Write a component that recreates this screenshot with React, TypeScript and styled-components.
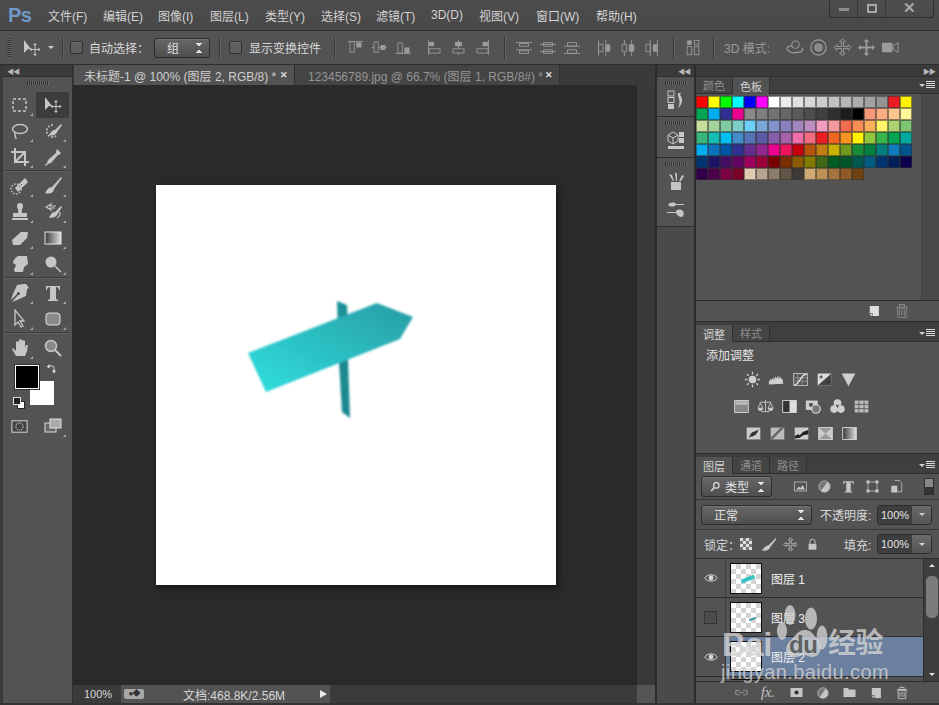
import { FC, ReactNode } from 'react';
import styled, { createGlobalStyle } from 'styled-components';

const GlobalStyle = createGlobalStyle`
  html, body {
    margin: 0;
    padding: 0;
    background: #535353;
  }
  body {
    font-family: "Liberation Sans", "Noto Sans CJK SC", sans-serif;
    font-size: 12px;
    color: #d4d4d4;
  }
`;

const menuItems = ['文件(F)', '编辑(E)', '图像(I)', '图层(L)', '类型(Y)', '选择(S)', '滤镜(T)', '3D(D)', '视图(V)', '窗口(W)', '帮助(H)'];

const swatches = [
  ['#ff0000', '#ffff00', '#00ff00', '#00ffff', '#0000ff', '#ff00ff', '#ffffff', '#ebebeb', '#e1e1e1', '#d7d7d7', '#cccccc', '#c2c2c2', '#b7b7b7', '#acacac', '#a1a1a1', '#959595', '#ed1c24', '#fff200'],
  ['#00a651', '#00aeef', '#2e3192', '#ec008c', '#8a8a8a', '#7f7f7f', '#737373', '#676767', '#5a5a5a', '#4d4d4d', '#3f3f3f', '#2f2f2f', '#1c1c1c', '#000000', '#f7977a', '#fbad82', '#fdc68c', '#fff799'],
  ['#c6df9c', '#a4d49d', '#81ca9d', '#7bcdc9', '#6ccff7', '#7ca6d8', '#8293ca', '#8881be', '#a286bd', '#bc8dbf', '#f49bc1', '#f5999d', '#f16c4d', '#f68e54', '#fbaf5a', '#fff467', '#acd372', '#7dc473'],
  ['#39b778', '#17bcb4', '#00bef2', '#438ccb', '#5573b7', '#5c5aa7', '#855fa8', '#a763a9', '#ef6ea8', '#f16d7e', '#ee1d24', '#f16522', '#f7941d', '#fff100', '#8fc63d', '#37b44a', '#00a650', '#00a99e'],
  ['#00aeef', '#0b72bc', '#0054a6', '#2e3192', '#662d91', '#92278f', '#ec008c', '#ed145b', '#c4000f', '#b45309', '#c17d11', '#c8b400', '#6f9a1f', '#168b38', '#007f3f', '#007f7f', '#0d7cbc', '#00568d'],
  ['#003471', '#1b1464', '#440e62', '#630460', '#9e005d', '#9e0039', '#790000', '#7a2e00', '#8c5a00', '#827b00', '#406618', '#005e20', '#005826', '#005952', '#005b7f', '#003370', '#002157', '#0d004c'],
  ['#32004b', '#4b0049', '#7b0046', '#7a0026', '#e0cbb0', '#b5a58f', '#8c7c69', '#635647', '#3f3a36', '#cfa873', '#bd9157', '#a5733d', '#8e5a26', '#6e4212'],
];

// every glyph sits on a 20x20 grid and takes its colour from the parent
const glyphs: { [key: string]: ReactNode } = {
  move: <><path d="M2 2v13l4-4 3 0z" /><path d="M13 7v9M9 11.500h8" stroke="currentColor" fill="none" /><path d="M13 5l-2 2h4zM13 18l-2-2h4zM7.500 11.500l2-2v4zM18.500 11.500l-2-2v4z" /></>,
  marquee: <rect x="3" y="4" width="13" height="12" fill="none" stroke="currentColor" strokeWidth="1.500" strokeDasharray="3 2" />,
  lasso: <><ellipse cx="10" cy="8" rx="7.500" ry="4.500" fill="none" stroke="currentColor" strokeWidth="1.500" /><path d="M5 11c-1 3 1 5 1 7" fill="none" stroke="currentColor" strokeWidth="1.500" /></>,
  quick: <><path d="M10 4a6 6 0 1 0 3 11" fill="none" stroke="currentColor" strokeWidth="1.500" strokeDasharray="2 1.500" /><path d="M18 3l-6 6c-3 0-4 2-6 5 4 1 7 0 8-3l5-7z" /></>,
  crop: <path d="M5 1v14h14M1 5h14v14M6 14L14 6" fill="none" stroke="currentColor" strokeWidth="2" />,
  dropper: <><path d="M14 2l4 4-2 2-1 0-7 8-3 1-2 2-1-1 2-2 1-3 8-7v-1z" /></>,
  heal: <><circle cx="6" cy="13" r="5" fill="none" stroke="currentColor" strokeWidth="1.500" strokeDasharray="1.500 1.500" /><path d="M8 16L18 6l-3-4L5 12z" /><path d="M9 10l1 1M11 8l1 1M12 11l1 1" stroke="#555" /></>,
  brush: <path d="M18 1L9 11c-3 0-5 2-7 6 4 1 8 1 9-4l8-11z" />,
  stamp: <><path d="M7 4a3 3 0 1 1 6 0c0 3-2 3-1 7h5v4H3v-4h5c1-4-1-4-1-7z" /><rect x="2" y="16" width="16" height="2" /></>,
  history: <><path d="M18 4l-6 6c-3 0-4 2-6 6 4 0 7-1 8-3l5-8z" /><path d="M13 4H7l1-2-5 3 5 3-1-2h5M14 16a6 6 0 0 0 3-6" fill="none" stroke="currentColor" strokeWidth="1.200" /></>,
  eraser: <path d="M11 4h7l-1 6-7 7H3l-1-5z" />,
  gradient: <><defs><linearGradient id="grad-a"><stop offset="0" stopColor="#3a3a3a" /><stop offset="1" stopColor="#e0e0e0" /></linearGradient></defs><rect x="2" y="4" width="16" height="12" fill="url(#grad-a)" stroke="#e8e8e8" /></>,
  smudge: <path d="M8 2h9l1 8-4 3-1 5H5l-1-2 2-5-3-2c0-3 2-5 5-7z" />,
  dodge: <><circle cx="8" cy="8" r="5.500" /><path d="M12 12l6 6" stroke="currentColor" strokeWidth="1.500" /></>,
  pen: <path d="M16 1l3 4-2 1-1 7-9 4-5 2 6-7a1.500 1.500 0 1 0-1-1l-6 6 2-6 4-9 7-1z" />,
  text: <path d="M3 3h14v4h-1c0-2-1-3-3-3v12l2 1v1H5v-1l2-1V4C5 4 4 5 4 7H3z" />,
  select: <path d="M5 1v15l3-3 3 5 2-1-3-5h4z" fill="none" stroke="currentColor" strokeWidth="1.300" />,
  shape: <rect x="3" y="4" width="14" height="12" rx="3" fill="#8a8a8a" stroke="#e0e0e0" />,
  hand: <path d="M6 18L2 11l1-1 3 3V4l1.500-1L9 4v5V2l1.500-1L12 2v7V3l1.500-1L15 3v7l1-3h2l-1 6-2 5z" />,
  zoom: <><circle cx="8" cy="8" r="5.500" fill="#8a8a8a" stroke="currentColor" strokeWidth="1.500" /><path d="M12 12l6 6" stroke="currentColor" strokeWidth="2" /></>,
  mask: <><rect x="2" y="4" width="16" height="12" fill="#444" stroke="#ddd" /><circle cx="10" cy="10" r="3.800" fill="none" stroke="#ddd" strokeDasharray="1.500 1" /></>,
  screen: <><rect x="2" y="7" width="11" height="9" fill="#666" stroke="#ddd" /><rect x="7" y="3" width="11" height="9" fill="#aaa" stroke="#ddd" /></>,
  swap: <><path d="M4 7V4h8c3 0 4 2 4 5v6" fill="none" stroke="currentColor" strokeWidth="2" /><path d="M7 0L2 4.500 7 9zM12 13l4 6 4-6z" /></>,
  alignTop: <><path d="M1 3h18" stroke="currentColor" fill="none" /><rect x="3.500" y="3.500" width="5" height="12" fill="none" stroke="currentColor" /><rect x="11" y="4" width="6" height="6" /></>,
  alignMiddle: <><path d="M1 10h18" stroke="currentColor" fill="none" /><rect x="3.500" y="3.500" width="5" height="12" fill="#555" stroke="currentColor" /><rect x="11" y="7" width="6" height="6" /></>,
  alignBottom: <><path d="M1 17h18" stroke="currentColor" fill="none" /><rect x="3.500" y="4.500" width="5" height="12" fill="none" stroke="currentColor" /><rect x="11" y="10" width="6" height="6.500" /></>,
  alignLeft: <><path d="M3 1v18" stroke="currentColor" fill="none" /><rect x="3.500" y="3.500" width="6" height="5" /><rect x="3.500" y="11.500" width="13" height="5" fill="none" stroke="currentColor" /></>,
  alignCenter: <><path d="M10 1v18" stroke="currentColor" fill="none" /><rect x="6" y="3.500" width="8" height="5" /><rect x="3.500" y="11.500" width="13" height="5" fill="#555" stroke="currentColor" /></>,
  alignRight: <><path d="M17 1v18" stroke="currentColor" fill="none" /><rect x="10" y="3.500" width="7" height="5" /><rect x="3.500" y="11.500" width="13" height="5" fill="none" stroke="currentColor" /></>,
  distTop: <><path d="M1 4h18M1 12h18" stroke="currentColor" fill="none" /><path d="M5 5h10v3H5zM5 13h10v3H5z" fill="none" stroke="currentColor" /></>,
  distMiddle: <><path d="M5 4h10v4H5zM5 12h10v4H5z" fill="#555" stroke="currentColor" /><path d="M1 6h18M1 14h18" stroke="currentColor" fill="none" /></>,
  distBottom: <><path d="M1 8h18M1 16h18" stroke="currentColor" fill="none" /><path d="M5 4h10v4H5zM5 12h10v4H5z" fill="none" stroke="currentColor" /></>,
  distLeft: <><path d="M4 1v18M12 1v18" stroke="currentColor" fill="none" /><path d="M4 6h5v8H4z" fill="none" stroke="currentColor" /><rect x="12" y="6" width="5" height="8" /></>,
  distCenter: <><path d="M6 1v18M14 1v18" stroke="currentColor" fill="none" /><path d="M3.500 6h5v8h-5z" fill="#555" stroke="currentColor" /><rect x="11" y="6" width="6" height="8" /></>,
  distRight: <><path d="M8 1v18M16 1v18" stroke="currentColor" fill="none" /><path d="M3.500 6h4.500v8H3.500z" fill="none" stroke="currentColor" /><rect x="11" y="6" width="5" height="8" /></>,
  autoAlign: <><rect x="3.500" y="1.500" width="5" height="5" /><rect x="11.500" y="1.500" width="5" height="5" fill="none" stroke="currentColor" /><rect x="3.500" y="8.500" width="5" height="9" fill="none" stroke="currentColor" /><rect x="11.500" y="8.500" width="5" height="9" fill="none" stroke="currentColor" /></>,
  orbit: <><circle cx="11" cy="7" r="4" fill="none" stroke="currentColor" /><path d="M2 12c0-3 3-4 5-3M18 10c2 3-2 6-5 5l-4 1-3-1-4-3" fill="none" stroke="currentColor" strokeWidth="1.300" /></>,
  roll: <><circle cx="10" cy="10" r="8" fill="none" stroke="currentColor" strokeWidth="1.300" /><circle cx="10" cy="10" r="4" fill="#8a8a8a" stroke="currentColor" /></>,
  pan: <path d="M10 1l3 3h-2v5h5V7l3 3-3 3v-2h-5v5h2l-3 3-3-3h2v-5H4v2l-3-3 3-3v2h5V4H7z" fill="none" stroke="currentColor" />,
  slide: <path d="M10 1l3 3h-2v5h5V7l3 3-3 3v-2h-5v5h2l-3 3-3-3h2v-5H4v2l-3-3 3-3v2h5V4H7z" />,
  video: <><rect x="1" y="5" width="11" height="10" rx="1" /><path d="M13 8l5-3v10l-5-3z" fill="none" stroke="currentColor" /></>,
  histPanel: <><rect x="2" y="1" width="6" height="5" fill="none" stroke="currentColor" /><rect x="2" y="7.500" width="6" height="5" fill="none" stroke="currentColor" /><rect x="2" y="14" width="6" height="5" /><path d="M12 3h3l-1 2c3 3 3 9-2 13 2-4 2-8 0-12z" /></>,
  cubePanel: <><path d="M7 2l5 3v6l-5 3-5-3V5z" fill="none" stroke="currentColor" /><path d="M2 5l5 3 5-3M7 8v6" fill="none" stroke="currentColor" /><rect x="13" y="2" width="5" height="5" /><rect x="13" y="8" width="5" height="5" /><rect x="2" y="16" width="16" height="3" /></>,
  brushes: <><path d="M5 11h10v8H5z" /><path d="M7 10L3 3l3 1 2 6zM10 10L9 1l2 2 0 7zM13 10l3-6 2 1-3 5z" /></>,
  brushPreset: <><path d="M2 6c2-3 6-3 8-1h8v1h-8c-2 2-6 2-8 0z" /><path d="M1 13h9v-1c2-2 5-2 7 0 1 2 1 5-1 6-3 0-5-2-6-4H1z" /></>,
  sun: <><circle cx="10" cy="10" r="4.500" /><path d="M10 1v3M10 16v3M1 10h3M16 10h3M3.500 3.500l2 2M14.500 14.500l2 2M3.500 16.500l2-2M14.500 5.500l2-2" stroke="currentColor" strokeWidth="1.500" /></>,
  levels: <path d="M1 16v-5l1 1 1-3 1 2 1-3 1 3 1-4 1 3 1-4 1 3 1-3 1 3 1-4 1 4 1-2 1 3 1-1 1 6z" />,
  curves: <><rect x="2" y="3" width="16" height="14" fill="none" stroke="currentColor" /><path d="M2 8h16M2 12h16M7 3v14M12 3v14" stroke="#999" /><path d="M3 16c7 0 6-12 14-12" fill="none" stroke="#eee" strokeWidth="1.500" /></>,
  exposure: <><rect x="2" y="3" width="16" height="14" fill="#ddd" /><path d="M18 3v14H2z" fill="#444" /><path d="M4 7h4M6 5v4M12 13h4" stroke="#222" /></>,
  vibrance: <path d="M2 3h16l-8 15z" />,
  hue: <><rect x="2" y="3" width="16" height="14" fill="#888" stroke="#ddd" /><rect x="3" y="4" width="14" height="4" fill="#bbb" /></>,
  balance: <><path d="M10 2v14M5 16h10M3 5h14M4 6l-3 6h6zM16 6l-3 6h6z" fill="none" stroke="currentColor" /><path d="M1 12a3 3 0 0 0 6 0zM13 12a3 3 0 0 0 6 0z" /></>,
  bw: <><rect x="2" y="3" width="16" height="14" fill="#333" stroke="#ddd" /><rect x="10" y="3" width="8" height="14" fill="#ddd" /></>,
  photo: <><rect x="1" y="3" width="14" height="11" /><circle cx="13" cy="13" r="5" fill="#777" stroke="#ddd" strokeWidth="1.300" /><circle cx="7" cy="8" r="2.500" fill="#555" /></>,
  mixer: <><circle cx="10" cy="6" r="4.500" /><circle cx="6" cy="13" r="4.500" /><circle cx="14" cy="13" r="4.500" /><path d="M8 8h4l-2 4z" fill="#555" /></>,
  lookup: <><rect x="2" y="3" width="16" height="14" fill="#bbb" /><path d="M2 7.500h16M2 12.500h16M7 3v14M13 3v14" stroke="#555" /></>,
  invert: <><rect x="2" y="3" width="16" height="14" fill="#ccc" /><path d="M4 15c2-1 2-6 6-7 3-1 4-1 6-3-1 4-3 7-6 8-3 1-4 1-6 2z" fill="#333" /></>,
  posterize: <><rect x="2" y="3" width="16" height="14" fill="#bbb" /><path d="M2 15L14 3h4L4 17H2z" fill="#666" /></>,
  threshold: <><rect x="2" y="3" width="16" height="14" fill="#ccc" /><path d="M2 13l4-2 2 1 4-4 6-2v5l-6 1-4 3-6 1z" fill="#222" /></>,
  selective: <><rect x="2" y="3" width="16" height="14" fill="#999" stroke="#ddd" /><path d="M2 3l8 7-8 7zM18 3l-8 7 8 7z" fill="#ccc" /></>,
  gradMap: <><rect x="2" y="3" width="16" height="14" fill="url(#grad-a)" stroke="#ddd" /></>,
  image: <><rect x="2" y="4" width="16" height="12" fill="none" stroke="currentColor" /><path d="M4 14l4-4 2 2 3-4 3 6z" /></>,
  half: <><circle cx="10" cy="10" r="7.500" fill="#777" stroke="currentColor" /><path d="M14 4a7.500 7.500 0 0 1-9 12z" /></>,
  frame: <><rect x="4" y="4" width="12" height="12" fill="none" stroke="currentColor" /><path d="M2 2h4v4H2zM14 2h4v4h-4zM2 14h4v4H2zM14 14h4v4h-4z" /></>,
  smart: <><path d="M8 2h6l3 3v12h-6" fill="none" stroke="currentColor" /><rect x="3" y="9" width="8" height="9" /></>,
  search: <><circle cx="11.500" cy="8" r="5" fill="none" stroke="currentColor" strokeWidth="2" /><path d="M8 12l-6 6" stroke="currentColor" strokeWidth="2.500" /></>,
  brushLock: <path d="M19 2L10 11c-3 0-5 3-8 6 5 1 9 0 10-4l7-9z" />,
  lock: <><path d="M6 9V6a4 4 0 0 1 8 0v3" fill="none" stroke="currentColor" strokeWidth="1.500" /><rect x="4" y="9" width="12" height="9" /></>,
  eye: <><path d="M1 10c4-6 14-6 18 0-4 6-14 6-18 0z" fill="none" stroke="currentColor" strokeWidth="1.400" /><circle cx="10" cy="10" r="3.400" /></>,
  link: <path d="M8 7H5a3 3 0 0 0 0 6h3M12 7h3a3 3 0 0 1 0 6h-3M6 10h8" fill="none" stroke="currentColor" strokeWidth="1.500" />,
  layerMask: <><rect x="2" y="4" width="16" height="12" /><circle cx="10" cy="10" r="2.800" fill="#333" /></>,
  folder: <path d="M2 4h6l1 2h9v10H2z" />,
  newLayer: <><path d="M4 3h13v14H8v-4H4z" /><path d="M3 14h4v4z" /></>,
  trash: <><path d="M7 4V2h6v2M3 5h14" fill="none" stroke="currentColor" strokeWidth="1.300" /><path d="M4 6.500h12L15 18H5zM7 8.500v7M10 8.500v7M13 8.500v7" fill="none" stroke="currentColor" strokeWidth="1.200" /></>,
};

const Svg = styled.svg<{ $size: number; $tone: string }>`
  width: ${p => p.$size}px;
  height: ${p => p.$size}px;
  color: ${p => p.$tone};
  fill: currentColor;
  flex: none;
  display: block;
`;

const Glyph: FC<{ name: string; size?: number; tone?: string }> = ({ name, size = 18, tone = '#c6c6c6' }) => (
  <Svg viewBox="0 0 20 20" $size={size} $tone={tone}>{glyphs[name]}</Svg>
);

const Frame = styled.div`
  width: 939px;
  height: 705px;
  box-sizing: border-box;
  overflow: hidden;
  position: relative;
  display: flex;
  flex-direction: column;
  background: #535353;
  border-bottom: 2px solid #333;
`;

const MenuBar = styled.div`
  height: 31px;
  flex: none;
  display: flex;
  align-items: center;
  background: linear-gradient(#4e4d4d, #494848);
  border-bottom: 1px solid #2e2e2e;
  box-sizing: border-box;
  position: relative;
`;

const Logo = styled.div`
  width: 48px;
  padding-left: 8px;
  box-sizing: border-box;
  font-size: 20px;
  font-weight: 700;
  color: #6f9ac7;
  letter-spacing: -0.5px;
`;

const MenuItem = styled.span<{ $width: number }>`
  width: ${p => p.$width}px;
  color: #d2d2d2;
  font-size: 12px;
  white-space: nowrap;
`;

const WindowControls = styled.div`
  position: absolute;
  right: 5px;
  top: -1px;
  height: 18px;
  display: flex;
  border: 1px solid #2e2e2e;
  border-top: none;
  border-radius: 0 0 3px 3px;
`;

const WindowButton = styled.div<{ $width: number }>`
  width: ${p => p.$width}px;
  display: flex;
  align-items: center;
  justify-content: center;
  border-left: 1px solid #373737;
  color: #a8a8a8;
  &:first-child {
    border-left: none;
  }
`;

const MinBar = styled.div`
  width: 10px;
  height: 3px;
  margin-top: 3px;
  background: #8f8f8f;
`;

const MaxBox = styled.div`
  width: 6px;
  height: 5px;
  border: 2px solid #a8a8a8;
`;

const CloseMark = styled.span`
  font-size: 15px;
  font-weight: 700;
  line-height: 16px;
`;

const OptionsBar = styled.div`
  height: 34px;
  flex: none;
  display: flex;
  align-items: center;
  background: #535353;
  border-bottom: 1px solid #2e2e2e;
  box-sizing: border-box;
  padding-left: 7px;
`;

const Grip = styled.div`
  width: 4px;
  height: 20px;
  flex: none;
  background: repeating-linear-gradient(#3a3a3a 0 1px, #5f5f5f 1px 2px);
`;

const HGrip = styled.div`
  width: 22px;
  height: 4px;
  margin: 4px auto 0;
  background: repeating-linear-gradient(90deg, #2f2f2f 0 1px, #6a6a6a 1px 2px);
`;

const ToolPreset = styled.div`
  width: 38px;
  margin-left: 11px;
  display: flex;
  align-items: center;
  gap: 6px;
`;

const Caret = styled.span`
  width: 0;
  height: 0;
  border-left: 3px solid transparent;
  border-right: 3px solid transparent;
  border-top: 3px solid #d0d0d0;
`;

const BarDivider = styled.div<{ $left: number; $right: number }>`
  width: 1px;
  height: 22px;
  flex: none;
  margin: 0 ${p => p.$right}px 0 ${p => p.$left}px;
  background: #3a3a3a;
  box-shadow: 1px 0 0 #626262;
`;

const CheckBox = styled.div`
  width: 13px;
  height: 13px;
  box-sizing: border-box;
  flex: none;
  border-radius: 2px;
  border: 1px solid #2f2f2f;
  background: #5f5f5f;
  box-shadow: inset 0 1px 0 #6d6d6d;
`;

const BarLabel = styled.span<{ $left: number; $width: number; $tone?: string }>`
  margin-left: ${p => p.$left}px;
  width: ${p => p.$width}px;
  flex: none;
  white-space: nowrap;
  color: ${p => p.$tone ?? '#d8d8d8'};
`;

const SelectBox = styled.div<{ $width: number; $height?: number }>`
  width: ${p => p.$width}px;
  height: ${p => p.$height ?? 20}px;
  box-sizing: border-box;
  flex: none;
  display: flex;
  align-items: center;
  padding: 0 7px 0 8px;
  border-radius: 3px;
  border: 1px solid #2c2c2c;
  background: linear-gradient(#676767, #4e4e4e);
  box-shadow: inset 0 1px 0 #757575;
  color: #e0e0e0;
`;

const SelectText = styled.span`
  flex: 1;
  margin-left: 4px;
  white-space: nowrap;
`;

const UpDown = styled.span`
  width: 6px;
  height: 10px;
  flex: none;
  background:
    linear-gradient(45deg, transparent 50%, #e0e0e0 50%) 0 0 / 3px 4px no-repeat,
    linear-gradient(-45deg, transparent 50%, #e0e0e0 50%) 3px 0 / 3px 4px no-repeat,
    linear-gradient(135deg, transparent 50%, #e0e0e0 50%) 0 6px / 3px 4px no-repeat,
    linear-gradient(-135deg, transparent 50%, #e0e0e0 50%) 3px 6px / 3px 4px no-repeat;
`;

const IconSlot = styled.div<{ $width: number }>`
  width: ${p => p.$width}px;
  flex: none;
  display: flex;
  justify-content: center;
`;

const Workspace = styled.div`
  flex: 1;
  min-height: 0;
  display: flex;
`;

const Toolbox = styled.div`
  width: 73px;
  flex: none;
  box-sizing: border-box;
  border-left: 3px solid #3a3a3a;
  border-right: 1px solid #2e2e2e;
  background: #535353;
`;

const CollapseBar = styled.div<{ $align?: string }>`
  height: 12px;
  flex: none;
  background: #3b3b3b;
  display: flex;
  align-items: center;
  justify-content: ${p => p.$align ?? 'flex-start'};
  padding: 0 4px;
  box-sizing: border-box;
  color: #b8b8b8;
  font-size: 7px;
  letter-spacing: -1px;
  border-bottom: 1px solid #2e2e2e;
`;

const ToolGrip = styled.div`
  height: 15px;
  display: flow-root;
`;

const ToolGroup = styled.div`
  display: grid;
  grid-template-columns: 33px 33px;
  border-bottom: 1px solid #3d3d3d;
  box-shadow: 0 1px 0 #5f5f5f;
  margin: 0 2px 2px 0;
  &:nth-of-type(6) {
    border-bottom: none;
    box-shadow: none;
  }
`;

const ToolCell = styled.div<{ $active?: boolean; $more?: boolean }>`
  height: 26px;
  position: relative;
  display: flex;
  align-items: center;
  justify-content: center;
  box-sizing: border-box;
  border-radius: 2px;
  background: ${p => (p.$active ? '#3c3c3c' : 'transparent')};
  &::after {
    content: '';
    display: ${p => (p.$more ? 'block' : 'none')};
    position: absolute;
    right: 3px;
    bottom: 2px;
    width: 0;
    height: 0;
    border-left: 3px solid transparent;
    border-bottom: 3px solid #a8a8a8;
  }
`;

const ColorWell = styled.div`
  height: 50px;
  position: relative;
`;

const Foreground = styled.div`
  position: absolute;
  left: 12px;
  top: 2px;
  width: 22px;
  height: 22px;
  border: 1px solid #fff;
  background: #000;
  outline: 1px solid #2e2e2e;
  z-index: 1;
`;

const Background = styled.div`
  position: absolute;
  left: 27px;
  top: 18px;
  width: 24px;
  height: 24px;
  background: #fff;
`;

const SwapMark = styled.div`
  position: absolute;
  left: 43px;
  top: 1px;
`;

const DefaultLower = styled.div`
  position: absolute;
  left: 14px;
  top: 38px;
  width: 6px;
  height: 6px;
  background: #fff;
  border: 1px solid #222;
`;

const DefaultUpper = styled.div`
  position: absolute;
  left: 10px;
  top: 34px;
  width: 6px;
  height: 6px;
  background: #222;
  border: 1px solid #ddd;
`;

const MaskRow = styled.div`
  display: grid;
  grid-template-columns: 33px 33px;
`;

const DocColumn = styled.div`
  width: 582px;
  flex: none;
  display: flex;
  flex-direction: column;
  background: #2b292b;
`;

const TabBar = styled.div`
  height: 20px;
  flex: none;
  display: flex;
  background: #3b3a3b;
  padding-left: 1px;
`;

const DocTab = styled.div<{ $active?: boolean; $width: number }>`
  width: ${p => p.$width}px;
  flex: none;
  box-sizing: border-box;
  padding: 0 6px 0 ${p => (p.$active ? 10 : 13)}px;
  display: flex;
  align-items: center;
  justify-content: space-between;
  white-space: nowrap;
  font-size: 12px;
  background: ${p => (p.$active ? '#535353' : '#454445')};
  color: ${p => (p.$active ? '#cfcfcf' : '#949494')};
  border-right: 1px solid #303030;
`;

const TabClose = styled.span`
  color: #dedede;
  font-size: 9px;
  font-weight: 700;
`;

const DocBody = styled.div`
  flex: 1;
  min-height: 0;
  display: flex;
`;

const DocPane = styled.div`
  flex: 1;
  display: flex;
  flex-direction: column;
  min-width: 0;
`;

const Pasteboard = styled.div`
  flex: 1;
  min-height: 0;
  padding: 100px 0 0 83px;
  background: #2b292b;
`;

const Canvas = styled.div`
  width: 400px;
  height: 400px;
  position: relative;
  background: #fff;
  box-shadow: 2px 3px 6px rgba(0, 0, 0, 0.55);
`;

const SignArt = styled.svg`
  position: absolute;
  left: 74px;
  top: 100px;
  width: 200px;
  height: 145px;
`;

const DocScroll = styled.div`
  width: 18px;
  flex: none;
  display: flex;
  flex-direction: column;
  background: #3a393a;
`;

const ScrollCorner = styled.div`
  height: 18px;
  margin-top: auto;
  background: #555;
`;

const StatusBar = styled.div`
  height: 18px;
  flex: none;
  display: flex;
  align-items: center;
  background: #3c3b3c;
  color: #d8d8d8;
`;

const ZoomField = styled.div`
  width: 48px;
  flex: none;
  padding-left: 11px;
  box-sizing: border-box;
  font-size: 11px;
`;

const StatusMain = styled.div`
  width: 209px;
  height: 100%;
  flex: none;
  display: flex;
  align-items: center;
  background: #535353;
  box-sizing: border-box;
  padding-left: 3px;
`;

const StatusChip = styled.div`
  width: 20px;
  height: 10px;
  flex: none;
  background: #a8a8a8;
  border-radius: 2px;
  color: #333;
  font-size: 8px;
  line-height: 10px;
  text-align: center;
  letter-spacing: -1px;
`;

const StatusText = styled.span`
  margin-left: 39px;
  width: 137px;
  flex: none;
  font-size: 12px;
`;

const PlayMark = styled.span`
  width: 0;
  height: 0;
  border-top: 4px solid transparent;
  border-bottom: 4px solid transparent;
  border-left: 7px solid #e8e8e8;
`;

const Dock = styled.div`
  width: 41px;
  flex: none;
  box-sizing: border-box;
  border-left: 2px solid #2b2b2b;
  border-right: 2px solid #2b2b2b;
  background: #4a4a4a;
  display: flex;
  flex-direction: column;
`;

const DockGroup = styled.div<{ $height: number }>`
  height: ${p => p.$height}px;
  box-sizing: border-box;
  background: #535353;
  border-bottom: 1px solid #2e2e2e;
  display: flex;
  flex-direction: column;
  align-items: center;
`;

const DockIcons = styled.div`
  margin-top: 5px;
  display: flex;
  flex-direction: column;
  align-items: center;
  gap: 8px;
`;

const Panels = styled.div`
  flex: 1;
  min-width: 0;
  display: flex;
  flex-direction: column;
  background: #3d3d3d;
`;

const PanelSection = styled.div<{ $height: number }>`
  height: ${p => p.$height}px;
  flex: none;
  box-sizing: border-box;
  display: flex;
  flex-direction: column;
  background: #535353;
  border-bottom: 1px solid #2e2e2e;
  margin-bottom: 3px;
`;

const LayersSection = styled(PanelSection)`
  margin-bottom: 0;
  border-bottom: none;
`;

const TabStrip = styled.div`
  height: 17px;
  flex: none;
  display: flex;
  align-items: stretch;
  background: #403f40;
  border-bottom: 1px solid #2e2e2e;
  position: relative;
  box-sizing: border-box;
`;

const PanelTab = styled.div<{ $active?: boolean }>`
  width: 37px;
  flex: none;
  display: flex;
  align-items: center;
  justify-content: center;
  font-size: 11px;
  box-sizing: border-box;
  border-right: 1px solid #303030;
  background: ${p => (p.$active ? '#535353' : '#454445')};
  color: ${p => (p.$active ? '#d4d4d4' : '#8f8f8f')};
  height: ${p => (p.$active ? '17px' : '16px')};
`;

const PanelMenu = styled.div`
  position: absolute;
  right: 4px;
  top: 4px;
  display: flex;
  align-items: center;
  gap: 1px;
`;

const MenuLines = styled.div`
  width: 9px;
  height: 8px;
  background: repeating-linear-gradient(#d8d8d8 0 1px, transparent 1px 2px);
`;

const SwatchBody = styled.div`
  flex: 1;
  min-height: 0;
  display: flex;
`;

const SwatchGrid = styled.div`
  width: 216px;
  flex: none;
  padding: 2px 0 0 0;
`;

const SwatchRow = styled.div`
  display: flex;
`;

const Swatch = styled.div<{ $color: string }>`
  width: 12px;
  height: 12px;
  box-sizing: border-box;
  background: ${p => p.$color};
  border: 1px solid rgba(50, 50, 50, 0.55);
`;

const SwatchScroll = styled.div`
  flex: 1;
  margin-left: 9px;
  border-left: 1px solid #444;
  background: #4a494a;
`;

const PanelFooter = styled.div`
  height: 20px;
  flex: none;
  display: flex;
  align-items: center;
  justify-content: flex-end;
  gap: 13px;
  padding-right: 29px;
  border-top: 1px solid #2e2e2e;
  position: relative;
`;

const ResizeDots = styled.div`
  position: absolute;
  right: 2px;
  bottom: 2px;
  width: 9px;
  height: 9px;
  background: radial-gradient(#222 40%, transparent 45%) 0 0 / 2px 2px;
  clip-path: polygon(100% 0, 100% 100%, 0 100%);
`;

const AdjustTitle = styled.div`
  padding: 4px 0 0 10px;
  font-size: 12px;
  color: #e4e4e4;
  height: 20px;
`;

const AdjustRow = styled.div<{ $left: number }>`
  display: flex;
  gap: 7px;
  padding-left: ${p => p.$left}px;
  height: 27px;
  align-items: center;
`;

const LayerTool = styled.div`
  height: 26px;
  flex: none;
  display: flex;
  align-items: center;
  box-sizing: border-box;
  border-bottom: 1px solid #373737;
  padding-left: 5px;
`;

const BlendRow = styled.div`
  height: 30px;
  flex: none;
  display: flex;
  align-items: center;
  box-sizing: border-box;
  border-bottom: 1px solid #373737;
  padding-left: 5px;
`;

const LockRow = styled.div`
  height: 29px;
  flex: none;
  display: flex;
  align-items: center;
  box-sizing: border-box;
  border-bottom: 1px solid #2e2e2e;
  padding-left: 8px;
`;

const LockChecker = styled.div`
  width: 12px;
  height: 12px;
  flex: none;
  background: repeating-conic-gradient(#777 0 25%, #ddd 0 50%) 0 0 / 6px 6px;
`;

const PercentBox = styled.div`
  width: 55px;
  height: 20px;
  margin-left: 3px;
  flex: none;
  display: flex;
  box-sizing: border-box;
  border: 1px solid #2c2c2c;
  border-radius: 3px;
  overflow: hidden;
`;

const PercentValue = styled.div`
  flex: 1;
  background: #3e3e3e;
  color: #e4e4e4;
  font-size: 11px;
  padding-left: 3px;
  line-height: 18px;
`;

const PercentArrow = styled.div`
  width: 19px;
  display: flex;
  align-items: center;
  justify-content: center;
  background: linear-gradient(#6b6b6b, #555);
`;

const FilterToggle = styled.div`
  width: 8px;
  height: 15px;
  margin-left: 16px;
  flex: none;
  background: linear-gradient(#888 50%, #333 50%);
  border: 1px solid #2e2e2e;
`;

const LayerList = styled.div`
  height: 122px;
  flex: none;
  display: flex;
  overflow: hidden;
`;

const LayerRows = styled.div`
  flex: 1;
  min-width: 0;
`;

const LayerRow = styled.div<{ $selected?: boolean; $height: number }>`
  height: ${p => p.$height}px;
  box-sizing: border-box;
  display: flex;
  align-items: center;
  border-bottom: 1px solid #2e2e2e;
  background: ${p => (p.$selected ? '#6b7f9e' : '#535353')};
`;

const NextThumbEdge = styled.div`
  width: 32px;
  height: 1px;
  margin: 2px 0 0 35px;
  background: #0e0e0e;
`;

const EyeCell = styled.div`
  width: 30px;
  height: 100%;
  flex: none;
  display: flex;
  align-items: center;
  justify-content: center;
  border-right: 1px solid #3c3c3c;
  box-sizing: border-box;
  background: #535353;
`;

const HiddenBox = styled.div`
  width: 11px;
  height: 11px;
  border: 1px solid #333;
  background: #4d4d4d;
`;

const Thumb = styled.div`
  width: 32px;
  height: 31px;
  margin-left: 4px;
  flex: none;
  box-sizing: border-box;
  border: 1px solid #0e0e0e;
  background: repeating-conic-gradient(#d4d4d4 0 25%, #fff 0 50%) 0 0 / 10px 10px;
  position: relative;
  overflow: hidden;
`;

const ThumbMark = styled.div<{ $wide?: boolean }>`
  position: absolute;
  left: ${p => (p.$wide ? 10 : 18)}px;
  top: ${p => (p.$wide ? 13 : 15)}px;
  width: ${p => (p.$wide ? 14 : 7)}px;
  height: ${p => (p.$wide ? 4 : 2)}px;
  background: ${p => (p.$wide ? '#35c4c4' : '#3a9aa0')};
  transform: rotate(-22deg);
  filter: blur(0.6px);
`;

const LayerName = styled.span`
  margin-left: 9px;
  color: #f0f0f0;
  font-size: 12px;
`;

const LayerScroll = styled.div`
  width: 16px;
  flex: none;
  background: #3e3e3e;
  display: flex;
  flex-direction: column;
  align-items: center;
  border-left: 1px solid #2e2e2e;
  box-sizing: border-box;
`;

const ScrollThumb = styled.div`
  width: 12px;
  height: 42px;
  margin-top: 9px;
  border-radius: 5px;
  background: #7c7c7c;
`;

const ScrollUp = styled.span`
  margin-top: 5px;
  width: 0;
  height: 0;
  border-left: 3px solid transparent;
  border-right: 3px solid transparent;
  border-bottom: 3px solid #ddd;
`;

const ScrollDown = styled.span`
  margin-top: auto;
  margin-bottom: 5px;
  width: 0;
  height: 0;
  border-left: 3px solid transparent;
  border-right: 3px solid transparent;
  border-top: 3px solid #ddd;
`;

const LayerFooter = styled.div`
  flex: 1;
  display: flex;
  align-items: center;
  gap: 12px;
  padding-left: 38px;
  border-top: 1px solid #2e2e2e;
  color: #c6c6c6;
`;

const FxMark = styled.span`
  font-family: "Liberation Serif", serif;
  font-style: italic;
  font-size: 14px;
  width: 16px;
`;

const Watermark = styled.div`
  position: absolute;
  left: 721px;
  top: 604px;
  width: 218px;
  height: 80px;
  pointer-events: none;
  color: rgba(212, 212, 212, 0.78);
`;

const PawSvg = styled.svg`
  position: absolute;
  left: 56px;
  top: 0;
  width: 52px;
  height: 56px;
  fill: rgba(212, 212, 212, 0.78);
`;

const WatermarkWord = styled.span<{ $left: number; $top: number; $size: number; $dark?: boolean }>`
  position: absolute;
  left: ${p => p.$left}px;
  top: ${p => p.$top}px;
  font-size: ${p => p.$size}px;
  font-weight: 700;
  letter-spacing: -0.5px;
  white-space: nowrap;
  color: ${p => (p.$dark ? 'rgba(83, 83, 83, 0.9)' : 'inherit')};
`;

const WatermarkUrl = styled.div`
  position: absolute;
  left: 0;
  top: 57px;
  font-size: 20px;
  letter-spacing: 0.4px;
  white-space: nowrap;
`;

const tools = [
  [['marquee', true], ['move', false], ['lasso', true], ['quick', true], ['crop', true], ['dropper', true]],
  [['heal', true], ['brush', true], ['stamp', true], ['history', true], ['eraser', true], ['gradient', true], ['smudge', true], ['dodge', true]],
  [['pen', true], ['text', true], ['select', true], ['shape', true]],
  [['hand', true], ['zoom', false]],
] as [string, boolean][][];

const adjustRows: { left: number; names: string[] }[] = [
  { left: 48, names: ['sun', 'levels', 'curves', 'exposure', 'vibrance'] },
  { left: 37, names: ['hue', 'balance', 'bw', 'photo', 'mixer', 'lookup'] },
  { left: 49, names: ['invert', 'posterize', 'threshold', 'selective', 'gradMap'] },
];

const layers = [
  { name: '图层 1', height: 39, wide: true, visible: true },
  { name: '图层 3', height: 39, wide: false, visible: false },
  { name: '图层 2', height: 40, wide: false, visible: true, selected: true, empty: true },
];

const App: FC = () => {
  const menuWidths = [55, 55, 52, 55, 56, 55, 55, 48, 57, 60, 50];

  return (
    <Frame>
      <GlobalStyle />
      <MenuBar>
        <Logo>Ps</Logo>
        {menuItems.map((item, i) => (
          <MenuItem key={item} $width={menuWidths[i]}>{item}</MenuItem>
        ))}
        <WindowControls>
          <WindowButton $width={27}><MinBar /></WindowButton>
          <WindowButton $width={27}><MaxBox /></WindowButton>
          <WindowButton $width={47}><CloseMark>✕</CloseMark></WindowButton>
        </WindowControls>
      </MenuBar>

      <OptionsBar>
        <Grip />
        <ToolPreset>
          <Glyph name="move" size={20} />
          <Caret />
        </ToolPreset>
        <BarDivider $left={2} $right={7} />
        <CheckBox />
        <BarLabel $left={6} $width={65}>自动选择：</BarLabel>
        <SelectBox $width={56}><SelectText>组</SelectText><UpDown /></SelectBox>
        <BarDivider $left={9} $right={9} />
        <CheckBox />
        <BarLabel $left={7} $width={85}>显示变换控件</BarLabel>
        <BarDivider $left={0} $right={8} />
        {['alignTop', 'alignMiddle', 'alignBottom'].map(n => (
          <IconSlot key={n} $width={24}><Glyph name={n} size={17} tone="#9c9c9c" /></IconSlot>
        ))}
        <IconSlot $width={7} />
        {['alignLeft', 'alignCenter', 'alignRight'].map(n => (
          <IconSlot key={n} $width={24}><Glyph name={n} size={17} tone="#9c9c9c" /></IconSlot>
        ))}
        <BarDivider $left={10} $right={7} />
        {['distTop', 'distMiddle', 'distBottom'].map(n => (
          <IconSlot key={n} $width={24}><Glyph name={n} size={18} tone="#9c9c9c" /></IconSlot>
        ))}
        <IconSlot $width={8} />
        {['distLeft', 'distCenter', 'distRight'].map(n => (
          <IconSlot key={n} $width={24}><Glyph name={n} size={18} tone="#9c9c9c" /></IconSlot>
        ))}
        <BarDivider $left={9} $right={10} />
        <Glyph name="autoAlign" size={18} tone="#9c9c9c" />
        <BarDivider $left={11} $right={10} />
        <BarLabel $left={0} $width={58} $tone="#9a9a9a">3D 模式:</BarLabel>
        {['orbit', 'roll', 'pan', 'slide', 'video'].map(n => (
          <IconSlot key={n} $width={24}><Glyph name={n} size={19} tone="#9c9c9c" /></IconSlot>
        ))}
      </OptionsBar>

      <Workspace>
        <Toolbox>
          <CollapseBar>◀◀</CollapseBar>
          <ToolGrip><HGrip /></ToolGrip>
          {tools.map((group, g) => (
            <ToolGroup key={g}>
              {group.map(([name, more]) => (
                <ToolCell key={name} $active={name === 'move'} $more={more}>
                  <Glyph name={name} size={20} />
                </ToolCell>
              ))}
            </ToolGroup>
          ))}
          <ColorWell>
            <Foreground />
            <Background />
            <SwapMark><Glyph name="swap" size={10} tone="#e0e0e0" /></SwapMark>
            <DefaultLower />
            <DefaultUpper />
          </ColorWell>
          <MaskRow>
            <ToolCell><Glyph name="mask" size={19} /></ToolCell>
            <ToolCell $more><Glyph name="screen" size={20} /></ToolCell>
          </MaskRow>
        </Toolbox>

        <DocColumn>
          <TabBar>
            <DocTab $active $width={221}>未标题-1 @ 100% (图层 2, RGB/8) *<TabClose>✕</TabClose></DocTab>
            <DocTab $width={265}>123456789.jpg @ 66.7% (图层 1, RGB/8#) *<TabClose>✕</TabClose></DocTab>
          </TabBar>
          <DocBody>
            <DocPane>
              <Pasteboard>
                <Canvas>
                  <SignArt viewBox="0 0 200 145">
                    <defs>
                      <linearGradient id="board" x1="0" y1="1" x2="1" y2="0">
                        <stop offset="0" stopColor="#30e0de" />
                        <stop offset="1" stopColor="#279ca4" />
                      </linearGradient>
                      <filter id="soft"><feGaussianBlur stdDeviation="1.100" /></filter>
                    </defs>
                    <g filter="url(#soft)">
                      <path d="M107 16l10 4 1 21-10 4z" fill="#1a9298" />
                      <path d="M109 78l9-4 2 59-8-6z" fill="#1a8a90" />
                      <path d="M18 68L147 18l36 14-13 22L36 107z" fill="url(#board)" />
                    </g>
                  </SignArt>
                </Canvas>
              </Pasteboard>
              <StatusBar>
                <ZoomField>100%</ZoomField>
                <StatusMain>
                  <StatusChip>●◆</StatusChip>
                  <StatusText>文档:468.8K/2.56M</StatusText>
                  <PlayMark />
                </StatusMain>
              </StatusBar>
            </DocPane>
            <DocScroll><ScrollCorner /></DocScroll>
          </DocBody>
        </DocColumn>

        <Dock>
          <CollapseBar $align="flex-end">◀◀</CollapseBar>
          <DockGroup $height={40}>
            <HGrip />
            <DockIcons><Glyph name="histPanel" size={20} /></DockIcons>
          </DockGroup>
          <DockGroup $height={41}>
            <HGrip />
            <DockIcons><Glyph name="cubePanel" size={20} /></DockIcons>
          </DockGroup>
          <DockGroup $height={69}>
            <HGrip />
            <DockIcons>
              <Glyph name="brushes" size={20} />
              <Glyph name="brushPreset" size={20} />
            </DockIcons>
          </DockGroup>
        </Dock>

        <Panels>
          <CollapseBar $align="space-between">
            <span />
            <span>▶▶</span>
          </CollapseBar>
          <PanelSection $height={245}>
            <TabStrip>
              <PanelTab>颜色</PanelTab>
              <PanelTab $active>色板</PanelTab>
              <PanelMenu><Caret /><MenuLines /></PanelMenu>
            </TabStrip>
            <SwatchBody>
              <SwatchGrid>
                {swatches.map((row, r) => (
                  <SwatchRow key={r}>
                    {row.map((color, c) => <Swatch key={c} $color={color} />)}
                  </SwatchRow>
                ))}
              </SwatchGrid>
              <SwatchScroll />
            </SwatchBody>
            <PanelFooter>
              <Glyph name="newLayer" size={14} tone="#e0e0e0" />
              <Glyph name="trash" size={16} tone="#8a8a8a" />
              <ResizeDots />
            </PanelFooter>
          </PanelSection>

          <PanelSection $height={129}>
            <TabStrip>
              <PanelTab $active>调整</PanelTab>
              <PanelTab>样式</PanelTab>
              <PanelMenu><Caret /><MenuLines /></PanelMenu>
            </TabStrip>
            <AdjustTitle>添加调整</AdjustTitle>
            {adjustRows.map(row => (
              <AdjustRow key={row.left} $left={row.left}>
                {row.names.map(n => <Glyph key={n} name={n} size={17} tone="#d0d0d0" />)}
              </AdjustRow>
            ))}
          </PanelSection>

          <LayersSection $height={246}>
            <TabStrip>
              <PanelTab $active>图层</PanelTab>
              <PanelTab>通道</PanelTab>
              <PanelTab>路径</PanelTab>
              <PanelMenu><Caret /><MenuLines /></PanelMenu>
            </TabStrip>
            <LayerTool>
              <SelectBox $width={71} $height={21}>
                <Glyph name="search" size={11} tone="#e0e0e0" />
                <SelectText>类型</SelectText>
                <UpDown />
              </SelectBox>
              <IconSlot $width={16} />
              {['image', 'half', 'text', 'frame', 'smart'].map(n => (
                <IconSlot key={n} $width={24}><Glyph name={n} size={15} /></IconSlot>
              ))}
              <FilterToggle />
            </LayerTool>
            <BlendRow>
              <SelectBox $width={111}><SelectText>正常</SelectText><UpDown /></SelectBox>
              <BarLabel $left={8} $width={54}>不透明度:</BarLabel>
              <PercentBox>
                <PercentValue>100%</PercentValue>
                <PercentArrow><Caret /></PercentArrow>
              </PercentBox>
            </BlendRow>
            <LockRow>
              <BarLabel $left={0} $width={36}>锁定：</BarLabel>
              <IconSlot $width={12}><LockChecker /></IconSlot>
              <IconSlot $width={32}><Glyph name="brushLock" size={17} /></IconSlot>
              <IconSlot $width={12}><Glyph name="pan" size={15} /></IconSlot>
              <IconSlot $width={32}><Glyph name="lock" size={13} /></IconSlot>
              <BarLabel $left={16} $width={30}>填充:</BarLabel>
              <PercentBox>
                <PercentValue>100%</PercentValue>
                <PercentArrow><Caret /></PercentArrow>
              </PercentBox>
            </LockRow>
            <LayerList>
              <LayerRows>
                {layers.map(layer => (
                  <LayerRow key={layer.name} $height={layer.height} $selected={layer.selected}>
                    <EyeCell>
                      {layer.visible ? <Glyph name="eye" size={14} tone="#d8d8d8" /> : <HiddenBox />}
                    </EyeCell>
                    <Thumb>{!layer.empty && <ThumbMark $wide={layer.wide} />}</Thumb>
                    <LayerName>{layer.name}</LayerName>
                  </LayerRow>
                ))}
                <NextThumbEdge />
              </LayerRows>
              <LayerScroll>
                <ScrollUp />
                <ScrollThumb />
                <ScrollDown />
              </LayerScroll>
            </LayerList>
            <LayerFooter>
              <Glyph name="link" size={15} tone="#8c8c8c" />
              <FxMark>fx.</FxMark>
              <Glyph name="layerMask" size={15} />
              <Glyph name="half" size={14} />
              <Glyph name="folder" size={15} />
              <Glyph name="newLayer" size={14} />
              <Glyph name="trash" size={14} />
            </LayerFooter>
          </LayersSection>
        </Panels>
      </Workspace>

      <Watermark>
        <WatermarkWord $left={1} $top={22} $size={33}>Bai</WatermarkWord>
        <PawSvg viewBox="0 0 52 56">
          <ellipse cx="13" cy="11" rx="5.500" ry="10" />
          <ellipse cx="34" cy="14.500" rx="6" ry="11" />
          <ellipse cx="45" cy="33.500" rx="5.500" ry="12" />
          <ellipse cx="5" cy="27" rx="5" ry="9" />
          <path d="M28 26c6 0 9 5 13 10 5 6 3 17-6 17-3 0-5-2-8-2s-6 3-11 2c-9-1-8-11-3-16 5-4 7-11 15-11z" />
        </PawSvg>
        <WatermarkWord $left={68} $top={27} $size={24} $dark>du</WatermarkWord>
        <WatermarkWord $left={107} $top={17} $size={28}>经验</WatermarkWord>
        <WatermarkUrl>jingyan.baidu.com</WatermarkUrl>
      </Watermark>
    </Frame>
  );
};

export default App;
